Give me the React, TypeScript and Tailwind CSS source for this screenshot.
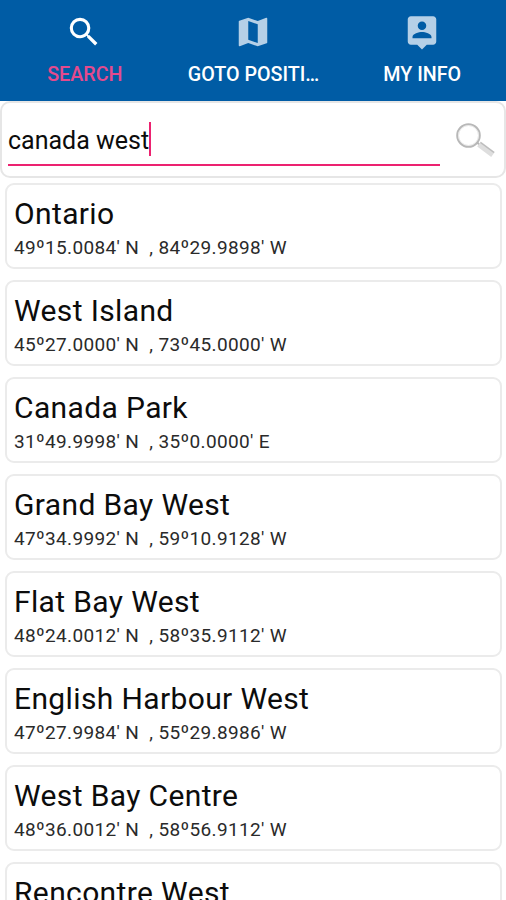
import type { ReactNode } from 'react'

interface Place {
  name: string
  lat: string
  lon: string
}

const PLACES: Place[] = [
  { name: 'Ontario', lat: "49º15.0084' N", lon: "84º29.9898' W" },
  { name: 'West Island', lat: "45º27.0000' N", lon: "73º45.0000' W" },
  { name: 'Canada Park', lat: "31º49.9998' N", lon: "35º0.0000' E" },
  { name: 'Grand Bay West', lat: "47º34.9992' N", lon: "59º10.9128' W" },
  { name: 'Flat Bay West', lat: "48º24.0012' N", lon: "58º35.9112' W" },
  { name: 'English Harbour West', lat: "47º27.9984' N", lon: "55º29.8986' W" },
  { name: 'West Bay Centre', lat: "48º36.0012' N", lon: "58º56.9112' W" },
  { name: 'Rencontre West', lat: '', lon: '' },
]

function Tab({ label, active, children }: { label: string; active?: boolean; children: ReactNode }) {
  return (
    <button className="flex flex-1 flex-col items-center pt-[13px]">
      <svg viewBox="0 0 24 24" className={`size-[38px] ${active ? 'fill-white' : 'fill-[#b5d0e7]'}`}>
        {children}
      </svg>
      <span
        className={`mt-[10px] pl-px text-[19.7px] leading-7 font-medium whitespace-nowrap ${active ? 'text-[#e54a8d]' : 'text-white'}`}
      >
        {label}
      </span>
    </button>
  )
}

function Magnifier() {
  return (
    <svg viewBox="0 0 42 38" className="h-[38px] w-[42px]" fill="none">
      <circle cx="14.5" cy="13.5" r="11.3" stroke="#b8b8b8" strokeWidth="2" />
      <circle cx="14.5" cy="13.5" r="10" stroke="#e6e6e6" strokeWidth="1" />
      <path d="M23 20.5l3 2.5" stroke="#b5b5b5" strokeWidth="2" />
      <path d="M25 22L39 32.5" stroke="#dedede" strokeWidth="6" />
      <path d="M26.5 20.5L40 30.5" stroke="#bcbcbc" strokeWidth="1.5" />
    </svg>
  )
}

export default function App() {
  return (
    <div className="flex h-[900px] w-full flex-col overflow-hidden bg-white font-['Roboto',sans-serif] text-[#0c0c0c]">
      {/* Tabs */}
      <nav className="flex h-[101px] shrink-0 bg-[#005ca5]">
        <Tab label="SEARCH" active>
          <path d="M15.5 14h-.79l-.28-.27A6.471 6.471 0 0 0 16 9.5 6.5 6.5 0 1 0 9.5 16c1.61 0 3.09-.59 4.23-1.57l.27.28v.79l5 4.99L20.49 19l-4.99-5zm-6 0C7.01 14 5 11.99 5 9.5S7.01 5 9.5 5 14 7.01 14 9.5 11.99 14 9.5 14z" />
        </Tab>
        <Tab label="GOTO POSITI…">
          <path d="M20.5 3l-.16.03L15 5.1 9 3 3.36 4.9c-.21.07-.36.25-.36.48V20.5c0 .28.22.5.5.5l.16-.03L9 18.9l6 2.1 5.64-1.9c.21-.07.36-.25.36-.48V3.5c0-.28-.22-.5-.5-.5zM15 19l-6-2.11V5l6 2.11V19z" />
        </Tab>
        <Tab label="MY INFO">
          <path d="M19 2H5c-1.11 0-2 .9-2 2v14c0 1.1.89 2 2 2h4l3 3 3-3h4c1.1 0 2-.9 2-2V4c0-1.1-.9-2-2-2zm-7 3.3c1.49 0 2.7 1.21 2.7 2.7 0 1.49-1.21 2.7-2.7 2.7-1.49 0-2.7-1.21-2.7-2.7 0-1.49 1.21-2.7 2.7-2.7zM18 16H6v-.9c0-2 4-3.1 6-3.1s6 1.1 6 3.1v.9z" />
        </Tab>
      </nav>

      {/* Search box */}
      <div className="flex h-[77px] shrink-0 rounded-[10px] border-2 border-[#e6e6e6] pl-[6px]">
        <div className="mt-[19px] flex h-[44px] w-[432px] border-b-2 border-[#ec2270]">
          <span className="text-[25px] leading-[38px] whitespace-nowrap">canada west</span>
          <span className="h-[34px] w-[2px] bg-[#ec2270]" />
        </div>
        <div className="mt-[19px] ml-[14px]">
          <Magnifier />
        </div>
      </div>

      {/* Results */}
      <ul className="mt-[5px] flex flex-col gap-[11px] pr-1 pl-[5px]">
        {PLACES.map(p => (
          <li key={p.name} className="h-[86px] shrink-0 rounded-[9px] border-2 border-[#ebebeb] pt-[10px] pl-[7px]">
            <div className="text-[30px] leading-[38px] tracking-[0.37px] whitespace-nowrap">{p.name}</div>
            {p.lat && (
              <div className="mt-px text-[19px] leading-7 tracking-[0.35px] whitespace-pre text-[#2a2a2a]">
                {p.lat}{'  , '}{p.lon}
              </div>
            )}
          </li>
        ))}
      </ul>
    </div>
  )
}
